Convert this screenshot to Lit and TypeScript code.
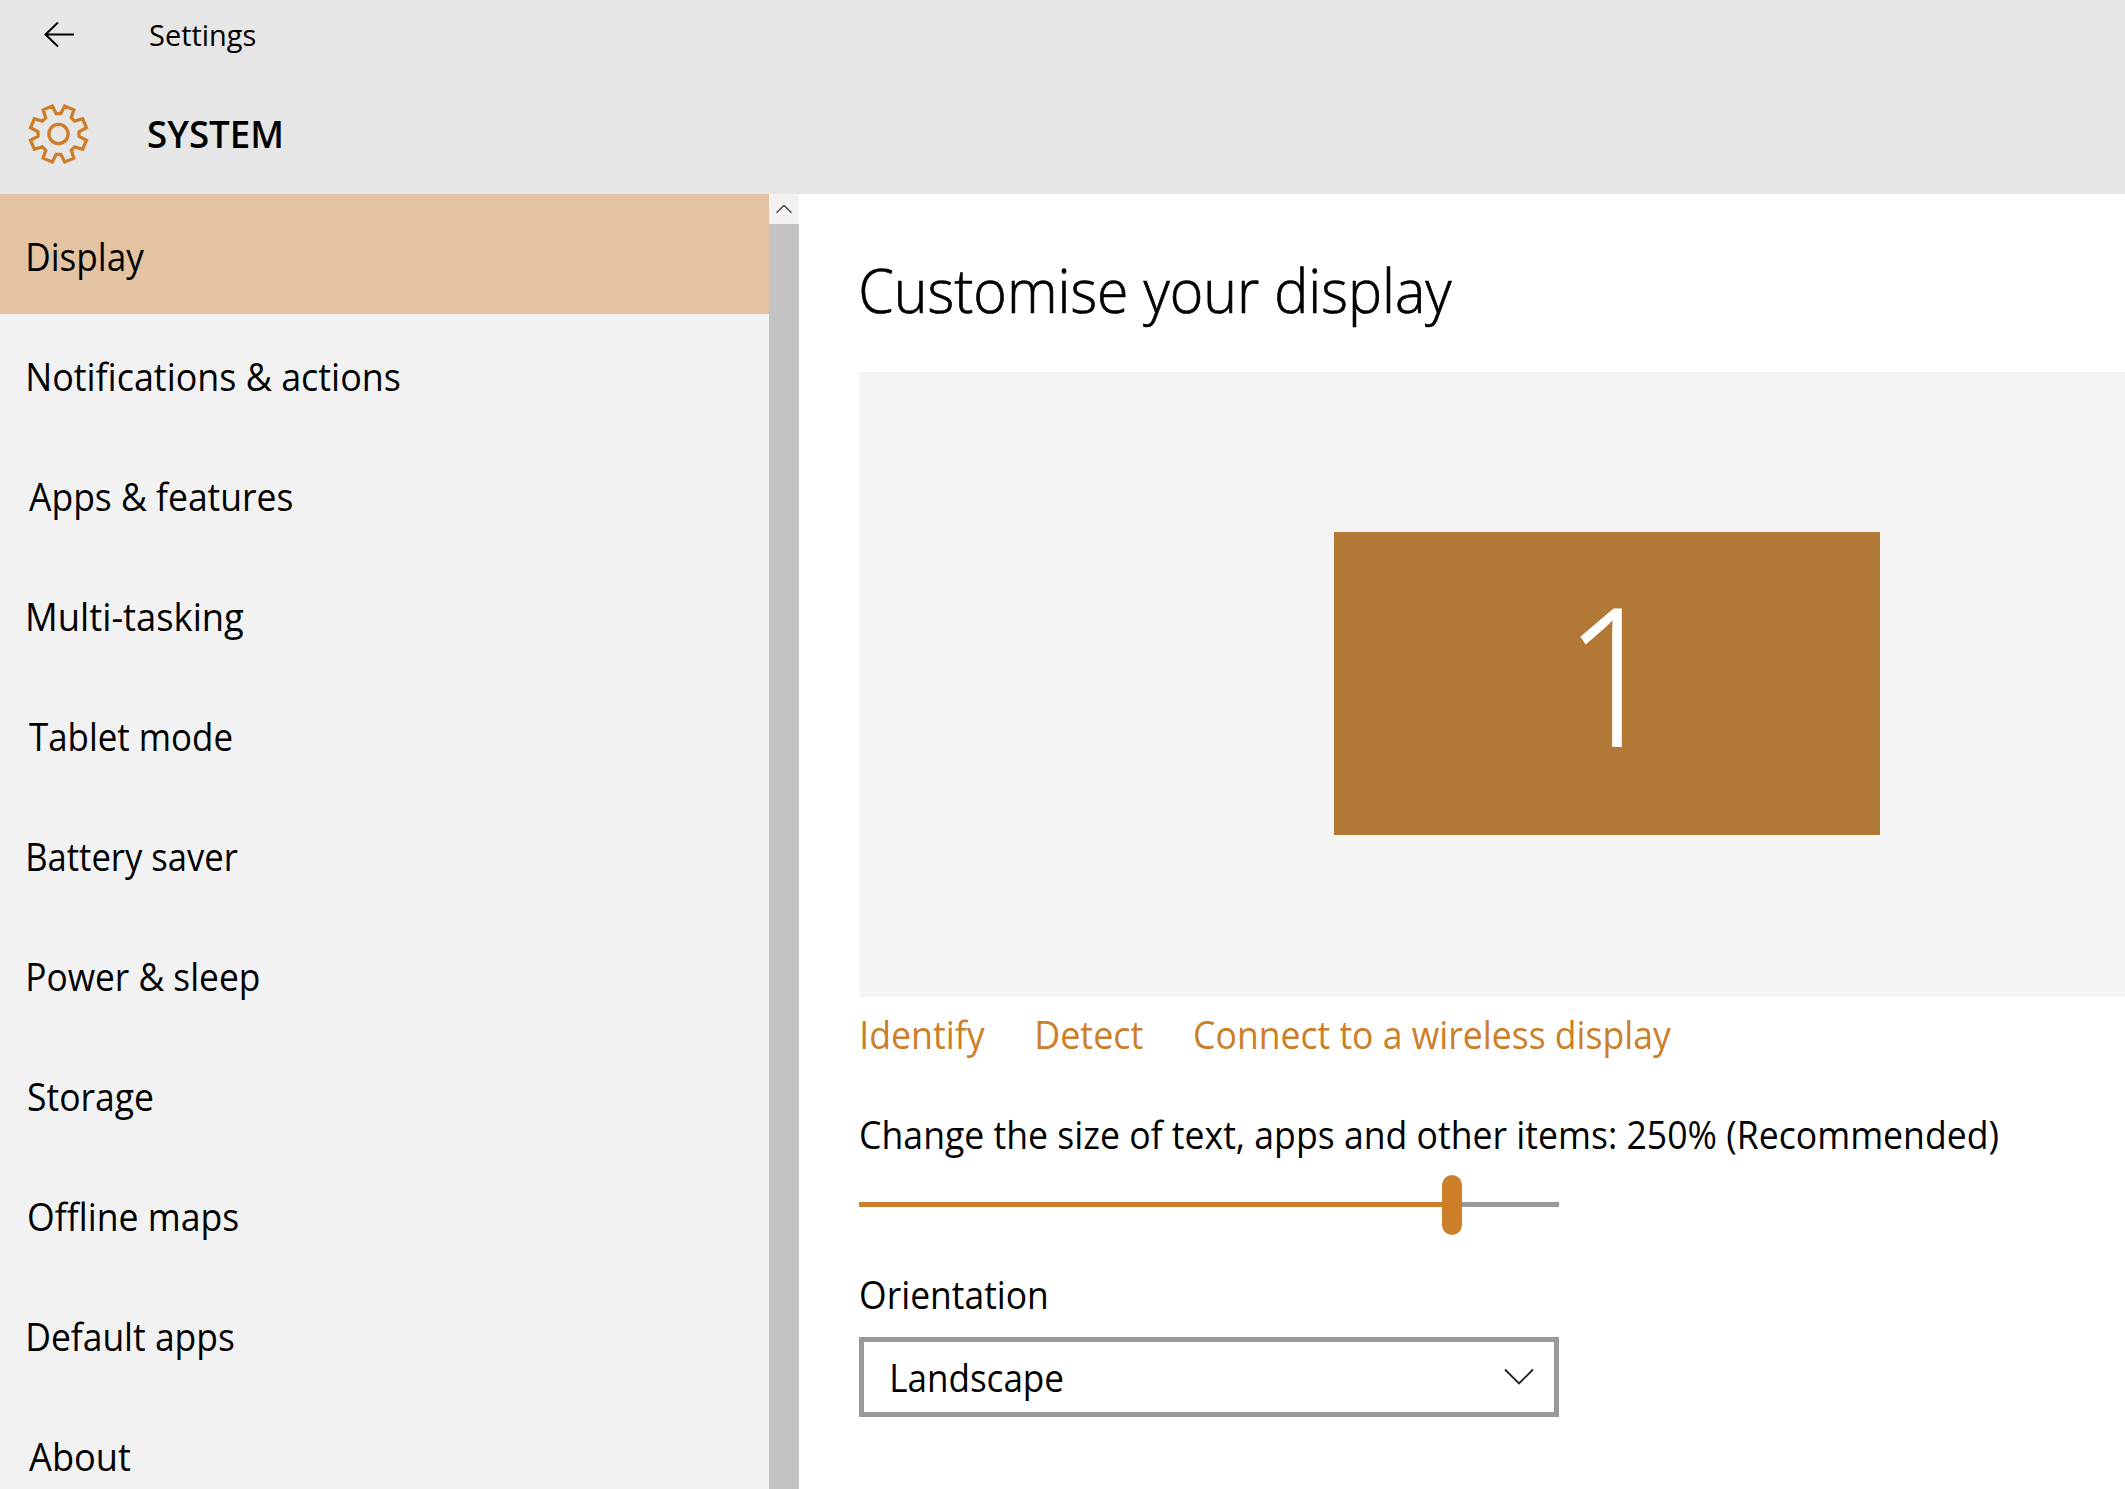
import { LitElement, html, css, svg } from "lit";
import { customElement, property } from "lit/decorators.js";

const NAV: Array<[string, number, number]> = [
  ["Display", 28, 116],
  ["Notifications & actions", 28, 372],
  ["Apps & features", 28.5, 263.5],
  ["Multi-tasking", 28, 215.5],
  ["Tablet mode", 28.5, 203],
  ["Battery saver", 28, 209.5],
  ["Power & sleep", 28, 230.5],
  ["Storage", 28, 125],
  ["Offline maps", 28.5, 209.5],
  ["Default apps", 28, 206],
  ["About", 28.5, 101.5],
];

/** A single line of text whose visible glyphs span exactly `span` pixels. */
@customElement("fit-text")
export class FitText extends LitElement {
  @property() text = "";
  @property({ type: Number }) span = 100;

  static styles = css`
    :host { display: block; flex: none; }
    .line { display: inline-block; white-space: pre; transform-origin: 0 50%; }
  `;

  updated() {
    const line = this.renderRoot.querySelector(".line") as HTMLElement;
    const s = getComputedStyle(line);
    const ctx = document.createElement("canvas").getContext("2d")!;
    ctx.font = `${s.fontWeight} ${s.fontSize} ${s.fontFamily}`;
    const m = ctx.measureText(this.text);
    const k = this.span / (m.actualBoundingBoxLeft + m.actualBoundingBoxRight);
    this.style.width = `${this.span}px`;
    line.style.transform = `translateX(${m.actualBoundingBoxLeft * k}px) scaleX(${k})`;
  }

  render() {
    return html`<span class="line">${this.text}</span>`;
  }
}

function gearPath(): string {
  const pts: string[] = [];
  const at = (deg: number, r: number) => {
    const a = (deg * Math.PI) / 180;
    pts.push(`${(30 + r * Math.sin(a)).toFixed(2)} ${(30 - r * Math.cos(a)).toFixed(2)}`);
  };
  for (let i = 0; i < 8; i++) {
    const g = i * 45;
    at(g - 6.5, 20.6);
    at(g + 6.5, 20.6);
    at(g + 12.6, 28.6);
    at(g + 32.4, 28.6);
  }
  return `M${pts.join("L")}Z`;
}

@customElement("app-root")
export class AppRoot extends LitElement {
  static styles = css`
    :host {
      display: flex; flex-direction: column; width: 2125px; height: 1489px; overflow: hidden;
      background: #fff; color: #000;
      font: 400 37.5px/50px "Open Sans", "Noto Sans", sans-serif;
    }
    svg { display: block; flex: none; fill: none; }
    .header { flex: none; height: 194px; background: #e6e6e6; }
    .bar { display: flex; align-items: center; height: 69px; padding-left: 44px; gap: 76px; font-size: 30px; }
    .section { display: flex; align-items: center; height: 130px; padding-left: 28px; gap: 59px; font-weight: 600; }
    .body { display: flex; flex: 1; min-height: 0; }
    .nav { width: 769px; background: #f2f2f2; overflow: hidden; }
    .item { display: flex; align-items: center; box-sizing: border-box; height: 120px; padding-top: 6px; }
    .active { background: #e4c3a2; }
    .scroll { width: 30px; background: #c2c2c2; }
    .up { height: 30px; background: #f2f2f2; }
    .main { flex: 1; min-width: 0; display: flex; flex-direction: column; padding: 56px 0 0 60px; }
    .title {
      height: 122px; padding-left: 2px; font-size: 60px; line-height: 80px; font-weight: 300;
      -webkit-text-stroke: 0.7px #000;
    }
    .canvas { height: 625px; background: #f4f4f4; padding: 160px 0 0 475px; box-sizing: border-box; }
    .monitor {
      width: 546px; height: 303px; background: #b27835; color: #fff; box-sizing: border-box;
      padding: 0 0 0 246px; font: 260 193px/281px "Noto Sans", "Open Sans", sans-serif;
    }
    .links { display: flex; height: 100px; padding: 13px 0 0 2.5px; gap: 52px; color: #cc7e28; box-sizing: border-box; }
    .size { height: 65px; padding: 13px 0 0 1.5px; }
    .slider { display: flex; align-items: center; width: 700px; height: 60px; }
    .fill { height: 5px; margin-bottom: 1px; background: #cc7e28; }
    .thumb { width: 20px; height: 60px; border-radius: 10px; background: #cc7e28; }
    .rest { flex: 1; height: 5px; margin-bottom: 1px; background: #999; }
    .label { height: 67px; padding: 35px 0 0 1.5px; }
    .select {
      display: flex; align-items: center; justify-content: space-between; box-sizing: border-box;
      width: 700px; height: 80px; border: 5px solid #999; padding: 0 20px 0 28px;
    }
    .value { padding-top: 2px; }
  `;

  render() {
    return html`
      <div class="header">
        <div class="bar">
          <svg width="30" height="26" viewBox="0 0 30 26" stroke="#000" stroke-width="2">
            <path d="M30 12.5H1.5M14 0.5L1.5 12.5L14 24.5" />
          </svg>
          <fit-text .text=${"Settings"} .span=${105}></fit-text>
        </div>
        <div class="section">
          <svg width="61" height="60" viewBox="0 0 60 60" stroke="#cc7e28" stroke-width="3.3">
            ${svg`<path d=${gearPath()} /><circle cx="30" cy="30" r="9.6" />`}
          </svg>
          <fit-text .text=${"SYSTEM"} .span=${133.5}></fit-text>
        </div>
      </div>
      <div class="body">
        <div class="nav">
          ${NAV.map(
            ([text, x, span], i) => html`
              <div class="item ${i === 0 ? "active" : ""}" style="padding-left:${x}px">
                <fit-text .text=${text} .span=${span}></fit-text>
              </div>`
          )}
        </div>
        <div class="scroll">
          <div class="up">
            <svg width="30" height="30" viewBox="0 0 30 30" stroke="#444" stroke-width="1.3">
              <path d="M7.5 18.7L15 11.5L22.5 18.7" />
            </svg>
          </div>
        </div>
        <div class="main">
          <div class="title"><fit-text .text=${"Customise your display"} .span=${591}></fit-text></div>
          <div class="canvas">
            <div class="monitor"><fit-text .text=${"1"} .span=${42.5}></fit-text></div>
          </div>
          <div class="links">
            <fit-text .text=${"Identify"} .span=${123}></fit-text>
            <fit-text .text=${"Detect"} .span=${106}></fit-text>
            <fit-text .text=${"Connect to a wireless display"} .span=${476}></fit-text>
          </div>
          <div class="size">
            <fit-text .text=${"Change the size of text, apps and other items: 250% (Recommended)"} .span=${1137}></fit-text>
          </div>
          <div class="slider">
            <div class="fill" style="width:583px"></div>
            <div class="thumb"></div>
            <div class="rest"></div>
          </div>
          <div class="label"><fit-text .text=${"Orientation"} .span=${185}></fit-text></div>
          <div class="select">
            <fit-text class="value" .text=${"Landscape"} .span=${171}></fit-text>
            <svg width="30" height="18" viewBox="0 0 30 18" stroke="#222" stroke-width="1.9">
              <path d="M1 1.5L15 15.5L29 1.5" />
            </svg>
          </div>
        </div>
      </div>
    `;
  }
}
